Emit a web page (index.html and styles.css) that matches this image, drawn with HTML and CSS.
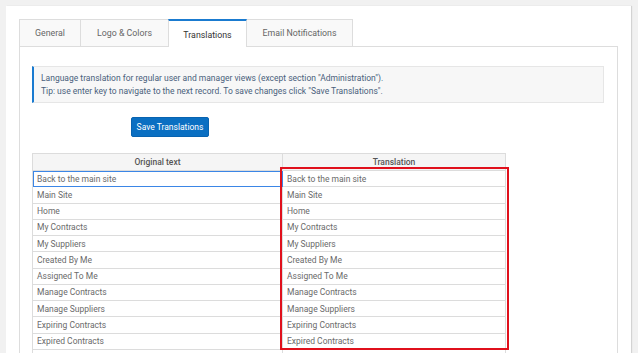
FILE: index.html
```html
<!DOCTYPE html>
<html lang="en">
<head>
<meta charset="utf-8"/>
<meta name="viewport" content="width=device-width,initial-scale=1.0"/>
    <title>Settings - Translations</title>

    <link rel="stylesheet" href="styles.css">
</head>
<body>
<section id="wrapper">
    <ul class="tabs">
        <li class="tab tab_general">General</li>
        <li class="tab tab_logo">Logo &amp; Colors</li>
        <li class="tab tab_trans on">Translations</li>
        <li class="tab tab_email">Email Notifications</li>
    </ul><!-- tabs -->

    <article class="tab_cont">
        <div class="notice">
            <p>Language translation for regular user and manager views (except section "Administration").</p>
            <p>Tip: use enter key to navigate to the next record. To save changes click "Save Translations".</p>
        </div>

        <button class="btn_save" type="button">Save Translations</button>

        <div class="tbl_wrap">
            <table class="tbl">
                <thead>
                    <tr><th>Original text</th><th>Translation</th></tr>
                </thead>
                <tbody>
                    <tr><td class="focus">Back to the main site</td><td>Back to the main site</td></tr>
                    <tr><td>Main Site</td><td>Main Site</td></tr>
                    <tr><td>Home</td><td>Home</td></tr>
                    <tr><td>My Contracts</td><td>My Contracts</td></tr>
                    <tr><td>My Suppliers</td><td>My Suppliers</td></tr>
                    <tr><td>Created By Me</td><td>Created By Me</td></tr>
                    <tr><td>Assigned To Me</td><td>Assigned To Me</td></tr>
                    <tr><td>Manage Contracts</td><td>Manage Contracts</td></tr>
                    <tr><td>Manage Suppliers</td><td>Manage Suppliers</td></tr>
                    <tr><td>Expiring Contracts</td><td>Expiring Contracts</td></tr>
                    <tr><td>Expired Contracts</td><td>Expired Contracts</td></tr>
                    <tr><td></td><td></td></tr>
                </tbody>
            </table>
            <span class="red_box"></span>
        </div><!-- tbl_wrap -->
    </article><!-- tab_cont -->
</section><!-- wrapper -->
</body>
</html>
```

FILE: styles.css
```css
*{margin:0;padding:0;box-sizing:border-box;}
li{list-style:none;}
html,body{height:100%;overflow:hidden;}
body{
    padding:6px 7px 0 6px;
    background:#f1f1f1;
    font-family:Roboto,"Liberation Sans",sans-serif;
    font-size:8.5px;color:#666;}

/*  */
#wrapper{
    height:100%;
    padding:13px 13px 0 13px;
    background:#fff;
    box-shadow:1px 0 1px rgba(0,0,0,.12);}

/*  */
.tabs{
    display:flex;
    height:27px;}

.tab{
    display:flex;
    justify-content:center;align-items:center;
    height:27px;
    margin-right:-1px;
    background:#f9f9f9;
    border:1px solid #ddd;
    border-bottom:0;
    font-size:8.8px;color:#666;}

    .tab_general{width:62px;}
    .tab_logo{width:89px;}
    .tab_trans{width:79px;}
    .tab_email{width:107px;}

.tab.on{
    position:relative;z-index:2;
    height:28px;
    background:#fff;
    border-top:2px solid #1a7bd0;
    color:#333;
    padding-top:2px;}

/*  */
.tab_cont{
    height:100%;
    padding:19px 13px 0 12px;
    border:1px solid #ddd;}

.notice{
    height:37px;
    padding:5px 7px;
    background:#f7f7f7;
    border:1px solid #e6e6e6;
    border-left:2px solid #1a7bd0;
    line-height:13px;
    color:#4a5f7c;}

.btn_save{
    display:block;
    width:78px;height:20px;
    margin:14px 0 0 99px;
    background:#0a6fc2;
    border:1px solid #0863b0;
    border-radius:2px;
    font-family:inherit;font-size:8.5px;color:#fff;}

/*  */
.tbl_wrap{
    position:relative;
    width:474px;
    margin-top:16px;}

.tbl{
    width:100%;
    border-collapse:collapse;
    table-layout:fixed;}

.tbl th{
    height:17px;
    background:#f5f5f5;
    border:1px solid #dcdcdc;
    font-weight:500;color:#555;
    text-align:center;}

.tbl th:first-child{width:250px;}

.tbl td{
    height:16.25px;
    padding:0 4px;
    border:1px solid #dcdcdc;
    white-space:nowrap;
    color:#6a6a6a;}

.tbl td.focus{
    outline:1px solid #3b86e6;
    outline-offset:-1px;}

.red_box{
    position:absolute;
    left:248px;top:14px;
    width:229px;height:183px;
    border:2px solid #e0101c;
    pointer-events:none;}
```
